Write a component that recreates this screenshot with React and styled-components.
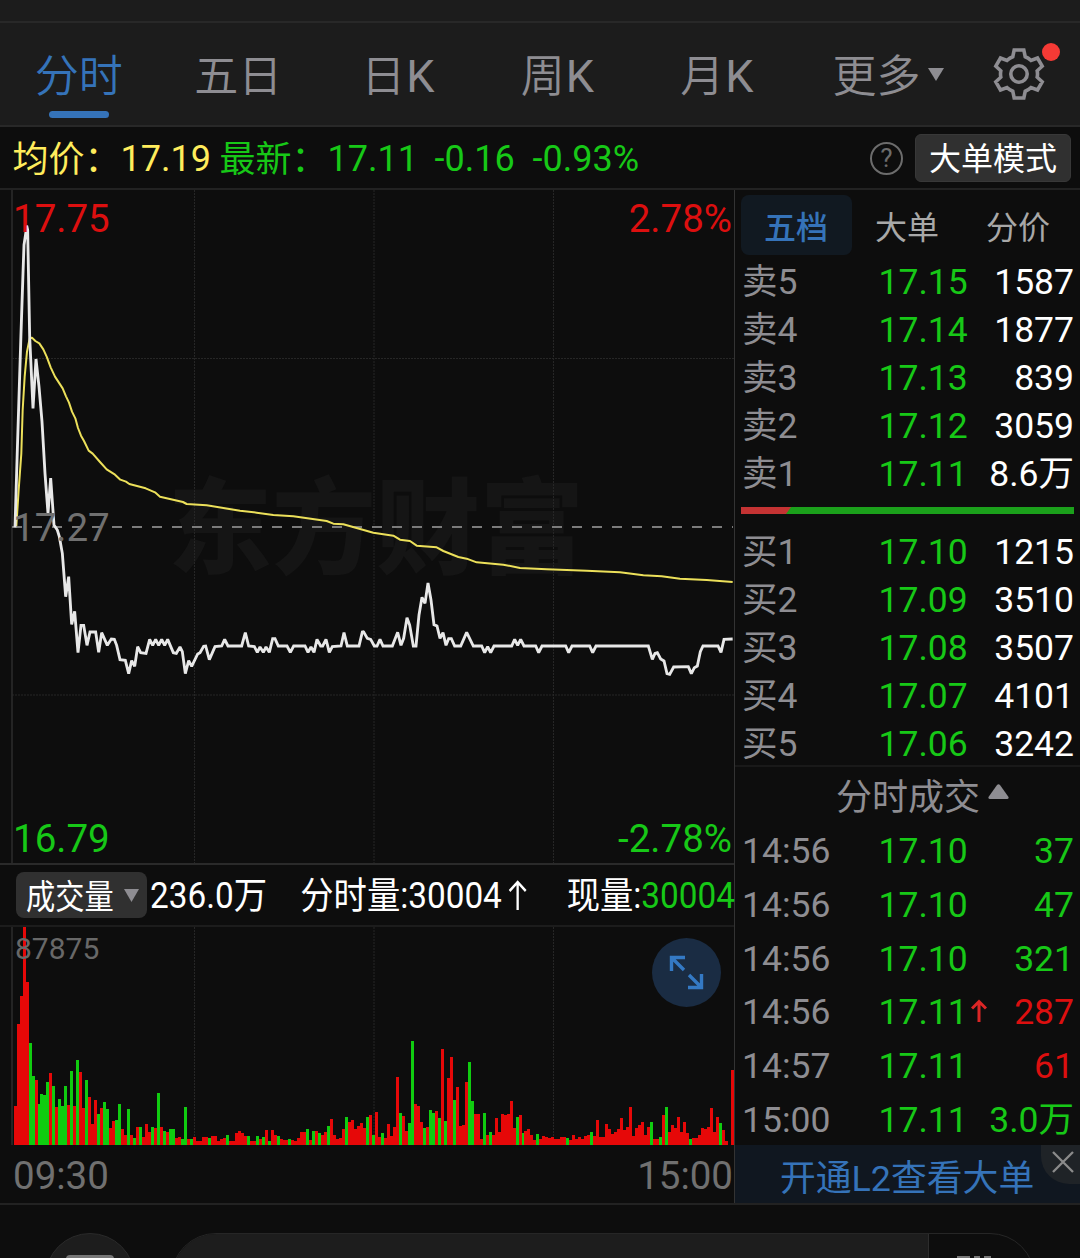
import React from 'react'
import styled, { createGlobalStyle } from 'styled-components';

const RED = '#dc0f0f';
const GREEN = '#17c817';
const BLUE = '#3573b9';
const GREY = '#8e8d92';

const tabs = [ '分时', '五日', '日', '周', '月' ];

const sells = [
    [ '卖5', '17.15', '1587' ],
    [ '卖4', '17.14', '1877' ],
    [ '卖3', '17.13', '839' ],
    [ '卖2', '17.12', '3059' ],
    [ '卖1', '17.11', '8.6万' ],
];

const buys = [
    [ '买1', '17.10', '1215' ],
    [ '买2', '17.09', '3510' ],
    [ '买3', '17.08', '3507' ],
    [ '买4', '17.07', '4101' ],
    [ '买5', '17.06', '3242' ],
];

const trades = [
    { time: '14:56', price: '17.10', amount: '37', color: GREEN },
    { time: '14:56', price: '17.10', amount: '47', color: GREEN },
    { time: '14:56', price: '17.10', amount: '321', color: GREEN },
    { time: '14:56', price: '17.11', amount: '287', color: RED, up: true },
    { time: '14:57', price: '17.11', amount: '61', color: RED },
    { time: '15:00', price: '17.11', amount: '3.0万', color: GREEN },
];

// chart units are a third of a pixel
const morning = '45,82 52,-150 63,-500 69,-680 72,-765 78,-805 80,-823 83,-810 89,-490 99,-275 108,-423 117,-340 126,-235 135,-80 144,40 152,-66 162,75 172,90 178,110 187,160 197,290 206,230 215,373 224,334 234,458 243,376 251,376 261,436 270,396 287,396 296,457 305,398 322,436 334,417 343,418 350,436 360,479 376,481 386,521 395,482 404,499 413,440 422,458 438,460 449,418 458,436 467,418 476,436 485,418 494,436 503,418 520,458 529,460 540,441 547,455 556,521 566,482 575,499 593,462 600,458 611,439 617,438 628,479 645,440 665,438 674,418 684,438 725,438 736,398 746,438 763,440 772,457 780,441 790,457 798,441 808,457 818,416 825,416 835,438 861,438 871,457 881,438 915,438 924,457 933,441 942,457 951,418 962,438 968,438 978,418 988,457 997,440 1023,438 1032,398 1042,438 1077,438 1087,396 1093,395';
const afternoon = '10,394 22,415 32,418 43,438 51,438 60,418 69,438 97,438 113,397 123,436 131,415 141,353 149,375 160,438 168,438 177,345 186,292 195,310 204,249 213,300 222,374 231,378 240,415 249,398 258,436 266,416 274,416 284,438 302,438 320,397 340,438 365,438 374,458 383,440 392,458 402,438 455,438 464,418 473,436 482,418 492,438 527,438 536,458 546,438 617,438 626,458 636,438 689,438 698,458 708,438 865,438 877,478 885,460 892,458 902,477 912,483 921,521 929,523 941,501 985,500 994,521 1003,503 1012,498 1021,455 1029,438 1074,438 1083,457 1092,418 1118,417';
const average = '49,78 56,-30 64,-140 68,-270 74,-370 81,-445 89,-485 96,-487 106,-477 118,-470 130,-452 140,-430 152,-398 165,-370 188,-335 198,-311 207,-292 216,-265 226,-245 234,-216 243,-193 252,-177 266,-148 278,-139 300,-114 320,-92 345,-76 361,-61 378,-55 388,-48 437,-35 465,-23 480,-10 549,6 560,12 620,16 720,32 770,38 820,45 880,49 980,63 1000,71 1030,73 1120,98 1180,107 1200,119 1230,123 1250,137 1310,142 1330,153 1375,171 1400,176 1430,187 1510,194 1560,204 1640,208 1760,212 1860,217 1930,226 1985,229 2040,236 2120,240 2198,246';

// top of each minute's bar, a minus marks a falling minute
const BASE = 854;
const volumes = [
    738, 493, 407, 202, 365, -549, -648, 659, -733, -701, -705, -667, 640, -677, 742, -718, -738, -678, 735, -633,
    738, -600, 637, 745, -661, 711, 791, 721, -763, 745, -726, -747, 804, 783, -779, -733, 806, 824, -747, 824,
    -835, 800, -802, 831, 793, 815, -800, 804, -698, 802, -813, 815, -808, -808, 833, 832, -836, -742, 836, -836,
    831, 843, 842, 830, 832, -833, 829, 829, 842, 838, 833, -824, 843, 843, 819, 813, 820, 829, -829, 843,
    843, -827, 836, -831, 810, -843, 811, 824, -827, 836, 840, 840, -836, 840, 843, 834, 817, 817, -806, 841,
    -813, 814, -820, 824, 817, -799, 778, 824, 837, 834, 808, -770, 787, 779, 808, 799, 789, 804, -771, 764,
    -825, 756, 831, -820, 833, 791, 829, 801, 651, -759, 767, 812, -789, -543, 732, 738, 785, -804, 801, -751,
    -760, 752, -775, 566, -783, 655, 590, -720, 682, 799, 794, 667, -607, -724, 763, 763, 836, -760, 824, -815,
    825, 775, 816, 763, 764, 762, 724, 803, -771, 766, -820, 814, 807, 825, 839, -823, 838, 829, 832, 835,
    831, 838, 838, 830, 832, -835, 841, 824, 836, 831, 837, 827, 825, -816, 828, 779, 832, 831, 791, 807,
    823, 815, 808, 774, 811, 801, 741, 828, 803, 795, 785, 824, 801, -787, 838, 838, -832, 764, -741, 815,
    794, 805, 771, 815, 785, 818, -838, 834, 835, 825, 803, 807, 802, 745, 815, 771, -788, 811, 844, 854,
    630,
];

function GearIcon() {
    return (
        <svg width="52" height="54" viewBox="-26 -27 52 54" fill="none" stroke={GREY} strokeWidth="3.600">
            <path d="M-4.8,-24 H4.8 L6.2,-17.3 Q9,-16.2 12,-13.6 L18.5,-16 L23.2,-7.8 L18.2,-3.2 Q18.8,0 18.2,3.2 L23.2,7.8 L18.5,16 L12,13.6 Q9,16.2 6.2,17.3 L4.8,24 H-4.8 L-6.2,17.3 Q-9,16.2 -12,13.6 L-18.5,16 L-23.2,7.8 L-18.2,3.2 Q-18.8,0 -18.2,-3.2 L-23.2,-7.8 L-18.5,-16 L-12,-13.6 Q-9,-16.2 -6.2,-17.3 Z" />
            <circle r="8.2" />
        </svg>
    )
}

function PriceChart() {
    return (
        <ChartSvg height="673" viewBox="0 -930 2202 2019" fill="none">
            <g stroke="#262626" strokeWidth="3" strokeDasharray="6 3">
                <path d="M583.5 -930V1089M1122 -930V1089M1660.500 -930V1089" />
                <path d="M36 -424.500H2202M36 585H2202" />
            </g>
            <path d="M36 -930V1089" stroke="#292929" strokeWidth="5" />
            <path d="M36 81H2199" stroke="#7b7b7b" strokeWidth="6" strokeDasharray="30 30" />
            <polyline points={average} stroke="#ece05a" strokeWidth="6" strokeLinejoin="round" />
            <g stroke="#e8e8e8" strokeWidth="8.500" strokeLinejoin="miter" strokeMiterlimit="2">
                <polyline points={morning} />
                <polyline points={afternoon} transform="translate(1080 0)" />
            </g>
        </ChartSvg>
    )
}

function VolumeChart() {
    return (
        <ChartSvg height="218" viewBox="0 201 2202 654" fill="none">
            <path d="M583.5 201V855M1122 201V855M1660.500 201V855" stroke="#262626" strokeWidth="3" strokeDasharray="6 3" />
            <path d="M36 201V855" stroke="#292929" strokeWidth="5" />
            {volumes.map( ( v, i ) => (
                <rect key={i} x={40.8 + i * 8.963} y={Math.abs( v )} width="9" height={BASE - Math.abs( v ) + 1} fill={v < 0 ? '#10cc10' : '#e60808'} shapeRendering="crispEdges" />
            ) )}
        </ChartSvg>
    )
}

export default function App() {
    return (
        <Page>
            <GlobalStyle />
            <TopStrip />
            <TabBar>
                {tabs.map( ( name, i ) => (
                    <Tab key={name} $active={i === 0}>{name}{i > 1 && <Latin>K</Latin>}</Tab>
                ) )}
                <MoreTab>
                    更多
                    <svg width="16" height="13"><path d="M0 0H16L8 13Z" fill={GREY} /></svg>
                </MoreTab>
                <Settings>
                    <GearIcon />
                    <Dot />
                </Settings>
            </TabBar>
            <QuoteBar>
                <Quote $color="#ffec5c" $width={207}><Cjk>均价：</Cjk>17.19</Quote>
                <Quote $color={GREEN} $width={215}><Cjk>最新：</Cjk>17.11</Quote>
                <Quote $color={GREEN} $width={98}>-0.16</Quote>
                <Quote $color={GREEN}>-0.93%</Quote>
                <Help>?</Help>
                <ModeBtn>大单模式</ModeBtn>
            </QuoteBar>
            <Main>
                <ChartSide>
                    <PricePanel>
                        <Watermark>东方财富</Watermark>
                        <PriceChart />
                        <Label $top={5} $color={RED}>17.75</Label>
                        <Label $top={5} $color={RED} $right>2.78%</Label>
                        <Label $top={314} $color="#707070">17.27</Label>
                        <Label $top={625} $color={GREEN}>16.79</Label>
                        <Label $top={625} $color={GREEN} $right>-2.78%</Label>
                    </PricePanel>
                    <VolumeInfo>
                        <Picker>
                            <PickerText>成交量</PickerText>
                            <svg width="15" height="13"><path d="M0 0H15L7.500 13Z" fill={GREY} /></svg>
                        </Picker>
                        <Stats>
                            <span>236.0<Cjk>万</Cjk></span>
                            <span>
                                <Cjk>分时量</Cjk>:30004
                                <StatArrow width="21" height="30" viewBox="0 0 21 30" fill="none" stroke="#fff" strokeWidth="2.600">
                                    <path d="M10.500 30V2M1.500 11L10.500 2L19.500 11" />
                                </StatArrow>
                            </span>
                            <span><Cjk>现量</Cjk>:<Green>30004</Green></span>
                        </Stats>
                    </VolumeInfo>
                    <VolumePanel>
                        <VolumeChart />
                        <MaxVolume>87875</MaxVolume>
                        <Expand>
                            <svg width="35" height="35" viewBox="0 0 35 35" fill="none" stroke="#3479c4" strokeWidth="3.400">
                                <path d="M16 2.500H2.500V16M2.500 2.500L15 15" />
                                <path d="M19 32.500H32.500V19M32.500 32.500L20 20" />
                            </svg>
                        </Expand>
                    </VolumePanel>
                    <TimeAxis>
                        <span>09:30</span>
                        <span>15:00</span>
                    </TimeAxis>
                </ChartSide>
                <OrderSide>
                    <BookTabs>
                        <BookTab $active>五档</BookTab>
                        <BookTab>大单</BookTab>
                        <BookTab>分价</BookTab>
                    </BookTabs>
                    <Book>
                        {sells.map( ( [ name, price, amount ] ) => (
                            <Row key={name}><Name>{name}</Name><Price>{price}</Price><Amount>{amount}</Amount></Row>
                        ) )}
                    </Book>
                    <Ratio />
                    <Book>
                        {buys.map( ( [ name, price, amount ] ) => (
                            <Row key={name}><Name>{name}</Name><Price>{price}</Price><Amount>{amount}</Amount></Row>
                        ) )}
                    </Book>
                    <TradesTitle>
                        分时成交
                        <svg width="21" height="15"><path d="M9 1Q10.500 -0.500 12 1L20.500 13Q21 15 19 15H2Q0 15 0.500 13Z" fill={GREY} /></svg>
                    </TradesTitle>
                    <Trades>
                        {trades.map( ( t, i ) => (
                            <Row key={i} $height={53.75}>
                                <Name>{t.time}</Name>
                                <Price>
                                    {t.price}
                                    {t.up && (
                                        <UpArrow width="16" height="23" viewBox="0 0 16 23" fill="none" stroke="#dc2626" strokeWidth="3">
                                            <path d="M8 23V2.500M1 9.500L8 2.500L15 9.500" />
                                        </UpArrow>
                                    )}
                                </Price>
                                <Amount $color={t.color}>{t.amount}</Amount>
                            </Row>
                        ) )}
                    </Trades>
                    <Promo>
                        开通L2查看大单
                        <Close>
                            <svg width="22" height="22" viewBox="0 0 22 22" stroke="#8b8b8b" strokeWidth="2.300"><path d="M1 1L21 21M21 1L1 21" /></svg>
                        </Close>
                    </Promo>
                </OrderSide>
            </Main>
            <Bottom>
                <RoundBtn><RoundIcon /></RoundBtn>
                <Pill>
                    <PillInput />
                    <PillEnd><Stub $w={13} /><Stub $w={6} /><Stub $w={7} /></PillEnd>
                </Pill>
            </Bottom>
        </Page>
    )
};

const GlobalStyle = createGlobalStyle`
*{
    box-sizing:border-box;
}
body{
    margin:0;
    background:#0d0d0d;
}
svg{
    display:block;
    flex:none;
}
`;

const Page = styled.div`
width:1080px;
height:1258px;
overflow:hidden;
display:flex;
flex-direction:column;
background:#0d0d0d;
font-family:Roboto, 'Noto Sans CJK SC', sans-serif;
font-size:36px;
line-height:48px;
white-space:nowrap;
`;

// the fallback glyphs sit a little high next to the digits
const Cjk = styled.span`
vertical-align:-1px;
line-height:1;
`;

const TopStrip = styled.div`
height:23px;
flex:none;
background:#1c1c1c;
border-bottom:2px solid #282828;
`;

const TabBar = styled.div`
height:104px;
flex:none;
display:flex;
background:#1c1c1c;
border-bottom:2px solid #282828;
font-size:44px;
font-weight:350;
line-height:108px;
color:${GREY};
`;

const Tab = styled.div`
width:159.500px;
padding-right:2px;
text-align:center;
position:relative;
color:${( { $active } ) => $active ? BLUE : GREY};
&::after{
    content:'';
    display:${( { $active } ) => $active ? 'block' : 'none'};
    position:absolute;
    left:49px;
    top:88px;
    width:60px;
    height:7px;
    border-radius:4px;
    background:${BLUE};
}
`;

const Latin = styled.span`
margin-left:1px;
font-size:45px;
font-weight:400;
`;

const MoreTab = styled.div`
display:flex;
width:195px;
padding-left:35px;
gap:7px;
svg{
    margin-top:45px;
}
`;

const Settings = styled.div`
position:relative;
margin-top:24px;
height:54px;
`;

const Dot = styled.i`
position:absolute;
left:49px;
top:-4px;
width:18px;
height:18px;
border-radius:50%;
background:#f53a35;
`;

const QuoteBar = styled.div`
height:63px;
flex:none;
display:flex;
align-items:center;
padding:1px 9px 0 12.500px;
border-bottom:2px solid #222;
`;

const Quote = styled.span`
width:${( { $width } ) => $width ? `${$width}px` : 'auto'};
padding-top:2px;
color:${( { $color } ) => $color};
`;

const Help = styled.div`
width:33px;
height:33px;
margin-left:auto;
margin-right:12px;
border:2.500px solid #6c6c6c;
border-radius:50%;
color:#6c6c6c;
font-size:26px;
line-height:29px;
text-align:center;
`;

const ModeBtn = styled.button`
width:156px;
height:48px;
padding:3px 0 0;
border:1px solid #383838;
border-radius:6px;
background:#303030;
color:#fff;
font:32px/43px Roboto, 'Noto Sans CJK SC', sans-serif;
`;

const Main = styled.div`
display:flex;
height:1015px;
flex:none;
border-bottom:2px solid #222;
`;

const ChartSide = styled.div`
width:734px;
flex:none;
`;

const ChartSvg = styled.svg`
width:734px;
position:relative;
`;

const PricePanel = styled.div`
height:675px;
position:relative;
border-bottom:2px solid #2a2a2a;
`;

const Watermark = styled.div`
position:absolute;
left:168px;
top:271px;
color:#151515;
font-size:104px;
font-weight:900;
line-height:140px;
`;

const Label = styled.span`
position:absolute;
top:${( { $top } ) => $top}px;
${( { $right } ) => $right ? 'right:2px;' : 'left:13px;'}
color:${( { $color } ) => $color};
font-size:38.500px;
`;

const VolumeInfo = styled.div`
height:62px;
display:flex;
align-items:center;
padding-left:16px;
border-bottom:2px solid #1c1c1c;
`;

const Picker = styled.div`
width:131px;
height:46px;
flex:none;
display:flex;
align-items:center;
padding-left:10px;
gap:10px;
border-radius:8px;
background:#303030;
color:#fff;
`;

const PickerText = styled.span`
width:88px;
padding-top:3px;
font-size:34px;
transform:scaleX(0.860);
transform-origin:left;
`;

const Stats = styled.div`
width:650px;
flex:none;
margin:2px 0 0 3px;
display:grid;
grid-template-columns:167px 296px auto;
color:#fff;
font-size:37px;
transform:scaleX(0.900);
transform-origin:left;
`;

const StatArrow = styled.svg`
display:inline-block;
margin-left:7px;
vertical-align:-2px;
`;

const Green = styled.span`
color:${GREEN};
`;

const VolumePanel = styled.div`
height:218px;
position:relative;
`;

const MaxVolume = styled.span`
position:absolute;
left:15px;
top:-2px;
color:#686868;
font-size:30px;
`;

const Expand = styled.div`
position:absolute;
left:652px;
top:11px;
width:69px;
height:69px;
display:flex;
align-items:center;
justify-content:center;
border-radius:50%;
background:#1a2c43;
`;

const TimeAxis = styled.div`
display:flex;
justify-content:space-between;
padding:7px 1px 0 13px;
color:#707070;
font-size:38.500px;
`;

const OrderSide = styled.div`
width:346px;
border-left:1px solid #333;
`;

const BookTabs = styled.div`
display:flex;
padding:5px 0 0 6px;
`;

const BookTab = styled.div`
width:111px;
height:60px;
padding-right:1px;
border-radius:8px;
background:${( { $active } ) => $active ? '#111921' : 'none'};
color:${( { $active } ) => $active ? BLUE : '#a8a8a8'};
font-size:32px;
font-weight:${( { $active } ) => $active ? 500 : 400};
line-height:66px;
text-align:center;
`;

const Book = styled.div`
height:240px;
margin-top:3px;
`;

const Row = styled.div`
height:${( { $height } ) => $height || 48}px;
line-height:${( { $height } ) => $height ? $height + 1.75 : 48}px;
display:flex;
padding:0 6px 0 7px;
font-size:35.500px;
`;

const Name = styled.span`
width:136.500px;
color:${GREY};
`;

const Price = styled.span`
position:relative;
color:${GREEN};
`;

const Amount = styled.span`
margin-left:auto;
color:${( { $color } ) => $color || '#fff'};
`;

const UpArrow = styled.svg`
position:absolute;
left:92px;
top:14px;
`;

const Ratio = styled.div`
height:7px;
margin:9px 6px 14px;
background:#1ba01b;
&::before{
    content:'';
    display:block;
    width:50px;
    height:7px;
    background:#c43333;
    clip-path:polygon(0 0, 100% 0, 45px 100%, 0 100%);
}
& + ${Book}{
    height:237px;
    margin:0;
}
`;

const TradesTitle = styled.div`
height:59px;
display:flex;
padding-left:101px;
gap:8px;
border-top:2px solid #191919;
color:${GREY};
line-height:62px;
svg{
    margin-top:17px;
}
`;

const Trades = styled.div`
height:321px;
`;

const Promo = styled.div`
position:relative;
height:58px;
padding:4px 0 0 45px;
background:#101720;
color:${BLUE};
font-size:35.800px;
line-height:60px;
`;

const Close = styled.div`
position:absolute;
right:0;
top:0;
width:39px;
height:39px;
padding:6px 0 0 11px;
border-bottom-left-radius:28px;
background:#1f2327;
`;

const Bottom = styled.div`
flex:1;
display:flex;
align-items:flex-start;
padding:28px 45px 0;
overflow:hidden;
`;

const RoundBtn = styled.div`
width:90px;
height:90px;
flex:none;
display:flex;
justify-content:center;
padding-top:21px;
border:1px solid #2a2a2a;
border-radius:50%;
background:#1d1d1d;
`;

const RoundIcon = styled.i`
width:48px;
height:40px;
border-radius:4px;
background:#777;
`;

const Pill = styled.div`
width:864px;
height:90px;
margin-left:36px;
display:flex;
border:1px solid #262626;
border-radius:45px;
overflow:hidden;
`;

const PillInput = styled.div`
width:757px;
background:#1d1d1d;
border-right:1px solid #2d2d2d;
`;

const PillEnd = styled.div`
display:flex;
gap:4px;
padding:22px 0 0 28px;
`;

const Stub = styled.i`
width:${( { $w } ) => $w}px;
height:8px;
background:#777;
`;
